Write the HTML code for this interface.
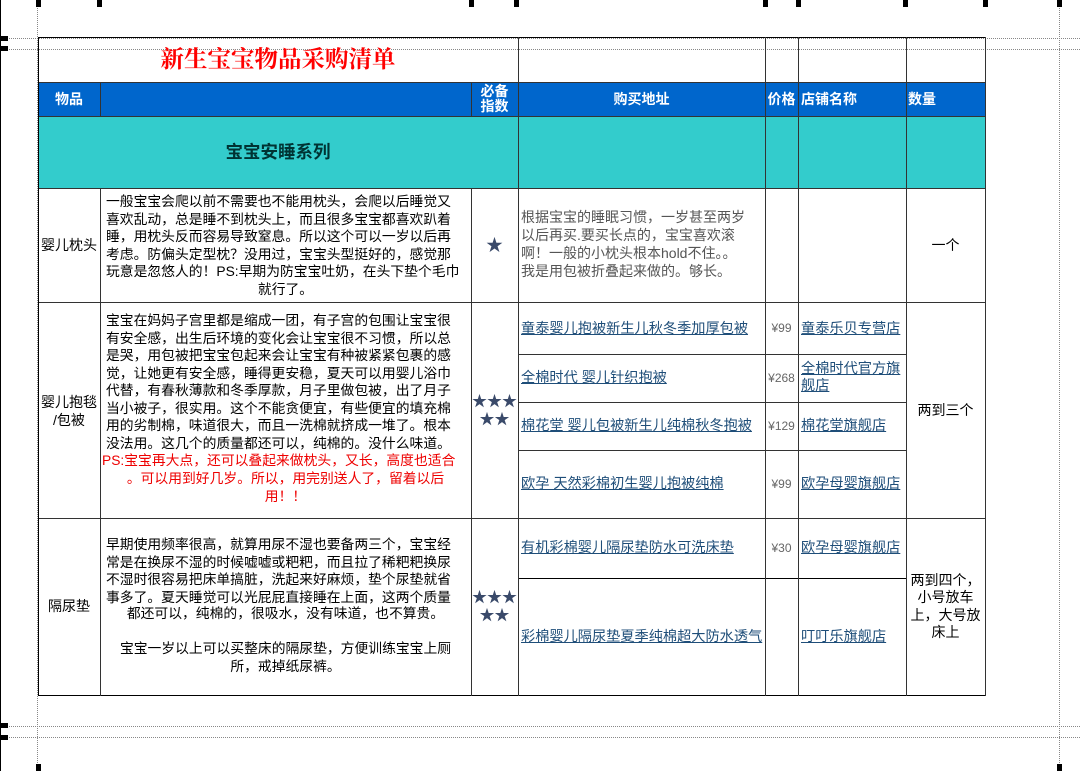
<!DOCTYPE html>
<html><head><meta charset="utf-8"><style>
*{margin:0;padding:0;box-sizing:border-box}
body{width:1080px;height:771px;background:#fff;position:relative;overflow:hidden;font-family:"Liberation Sans","Noto Sans CJK SC","WenQuanYi Zen Hei",sans-serif;font-size:14px;color:#000}
.a{position:absolute}
.h{position:absolute;height:1px;background:#333}
.v{position:absolute;width:1px;background:#333}
.c{position:absolute;display:flex;align-items:center;justify-content:center;text-align:center;line-height:17px}
.lk{position:absolute;display:flex;align-items:center;line-height:16px;color:#1f4e79;text-decoration:underline;white-space:nowrap;font-size:14.2px}
.p{color:#666;font-size:12px}
.t{position:absolute;line-height:17.5px;white-space:nowrap;font-size:13.8px}
.dh{position:absolute;height:0;border-top:1px dotted #888}
.dv{position:absolute;width:0;border-left:1px dotted #888}
.m{position:absolute;width:5px;height:7px;background:#000;top:0}
</style></head><body>
<div class="dh" style="left:0;top:38px;width:1080px"></div>
<div class="dh" style="left:0;top:49px;width:1080px"></div>
<div class="dh" style="left:0;top:726px;width:1080px"></div>
<div class="dh" style="left:0;top:737px;width:1080px"></div>
<div class="dv" style="left:37px;top:0;height:771px"></div>
<div class="dv" style="left:1059px;top:0;height:771px"></div>
<div class="a" style="left:0;top:0;width:1px;height:771px;background:#000"></div>
<div class="a" style="left:0;top:36px;width:8px;height:5px;background:#000"></div>
<div class="a" style="left:0;top:46px;width:8px;height:5px;background:#000"></div>
<div class="a" style="left:0;top:723px;width:8px;height:5px;background:#000"></div>
<div class="a" style="left:0;top:735px;width:8px;height:5px;background:#000"></div>
<div class="m" style="left:36px"></div><div class="m" style="left:97px"></div>
<div class="m" style="left:469px"></div><div class="m" style="left:514px"></div>
<div class="m" style="left:763px"></div><div class="m" style="left:796px"></div>
<div class="m" style="left:903px"></div><div class="m" style="left:983px"></div>
<div class="m" style="left:1057px"></div>
<div class="a" style="left:1057px;top:764px;width:5px;height:7px;background:#000"></div>
<div class="a" style="left:36px;top:764px;width:5px;height:7px;background:#000"></div>

<div class="a" style="left:38px;top:82px;width:947px;height:34px;background:#0066cc"></div>
<div class="a" style="left:38px;top:116px;width:947px;height:72px;background:#33cccc"></div>

<div class="c" style="left:38px;top:38px;width:480px;height:44px;color:#ff0000;font-family:'Liberation Serif','Noto Serif CJK SC',serif;font-size:23.5px;font-weight:bold">新生宝宝物品采购清单</div>
<div class="c" style="left:38px;top:82px;width:62px;height:34px;color:#fff;font-weight:bold">物品</div>
<div class="c" style="left:471px;top:82px;width:47px;height:34px;color:#fff;font-weight:bold;line-height:15px">必备<br>指数</div>
<div class="c" style="left:518px;top:82px;width:247px;height:34px;color:#fff;font-weight:bold">购买地址</div>
<div class="c" style="left:765px;top:82px;width:33px;height:34px;color:#fff;font-weight:bold">价格</div>
<div class="a" style="left:801px;top:82px;height:34px;line-height:34px;color:#fff;font-weight:bold">店铺名称</div>
<div class="a" style="left:908px;top:82px;height:34px;line-height:34px;color:#fff;font-weight:bold">数量</div>
<div class="c" style="left:38px;top:116px;width:480px;height:72px;font-weight:bold;font-size:17.5px;color:#003333">宝宝安睡系列</div>

<div class="c" style="left:38px;top:188px;width:62px;height:115px">婴儿枕头</div>
<div class="t" style="left:106px;top:193px">一般宝宝会爬以前不需要也不能用枕头，会爬以后睡觉又<br>喜欢乱动，总是睡不到枕头上，而且很多宝宝都喜欢趴着<br>睡，用枕头反而容易导致窒息。所以这个可以一岁以后再<br>考虑。防偏头定型枕？没用过，宝宝头型挺好的，感觉那<br>玩意是忽悠人的！PS:早期为防宝宝吐奶，在头下垫个毛巾</div>
<div class="c" style="left:100px;top:281px;width:371px;height:17px;font-size:13.8px">就行了。</div>
<div class="c" style="left:471px;top:188px;width:47px;height:115px;color:#3a4a6a;font-size:17px">★</div>
<div class="t" style="left:521px;top:208px;color:#555;line-height:18px;font-size:14px">根据宝宝的睡眠习惯，一岁甚至两岁<br>以后再买.要买长点的，宝宝喜欢滚<br>啊！一般的小枕头根本hold不住。。<br>我是用包被折叠起来做的。够长。</div>
<div class="c" style="left:906px;top:188px;width:79px;height:115px">一个</div>

<div class="c" style="left:38px;top:303px;width:62px;height:215px;line-height:18px">婴儿抱毯<br>/包被</div>
<div class="t" style="left:106px;top:312px">宝宝在妈妈子宫里都是缩成一团，有子宫的包围让宝宝很<br>有安全感，出生后环境的变化会让宝宝很不习惯，所以总<br>是哭，用包被把宝宝包起来会让宝宝有种被紧紧包裹的感<br>觉，让她更有安全感，睡得更安稳，夏天可以用婴儿浴巾<br>代替，有春秋薄款和冬季厚款，月子里做包被，出了月子<br>当小被子，很实用。这个不能贪便宜，有些便宜的填充棉<br>用的劣制棉，味道很大，而且一洗棉就挤成一堆了。根本<br>没法用。这几个的质量都还可以，纯棉的。没什么味道。</div>
<div class="t" style="left:102px;top:452px;color:#e00">PS:宝宝再大点，还可以叠起来做枕头，又长，高度也适合</div>
<div class="c" style="left:100px;top:470px;width:371px;height:35px;color:#e00;line-height:17.5px;font-size:13.8px">。可以用到好几岁。所以，用完别送人了，留着以后<br>用！！</div>
<div class="c" style="left:471px;top:303px;width:47px;height:215px;color:#3a4a6a;font-size:15px;line-height:18px">★★★<br>★★</div>
<div class="lk" style="left:521px;top:303px;height:51px">童泰婴儿抱被新生儿秋冬季加厚包被</div>
<div class="c p" style="left:765px;top:303px;width:33px;height:51px">¥99</div>
<div class="lk" style="left:801px;top:303px;height:51px">童泰乐贝专营店</div>
<div class="lk" style="left:521px;top:354px;height:48px">全棉时代 婴儿针织抱被</div>
<div class="c p" style="left:765px;top:354px;width:33px;height:48px">¥268</div>
<div class="lk" style="left:801px;top:354px;height:48px;white-space:normal;width:104px;line-height:17px">全棉时代官方旗舰店</div>
<div class="lk" style="left:521px;top:402px;height:48px">棉花堂 婴儿包被新生儿纯棉秋冬抱被</div>
<div class="c p" style="left:765px;top:402px;width:33px;height:48px">¥129</div>
<div class="lk" style="left:801px;top:402px;height:48px">棉花堂旗舰店</div>
<div class="lk" style="left:521px;top:450px;height:68px">欧孕 天然彩棉初生婴儿抱被纯棉</div>
<div class="c p" style="left:765px;top:450px;width:33px;height:68px">¥99</div>
<div class="lk" style="left:801px;top:450px;height:68px">欧孕母婴旗舰店</div>
<div class="c" style="left:906px;top:303px;width:79px;height:215px">两到三个</div>

<div class="c" style="left:38px;top:518px;width:62px;height:177px">隔尿垫</div>
<div class="t" style="left:106px;top:536px">早期使用频率很高，就算用尿不湿也要备两三个，宝宝经<br>常是在换尿不湿的时候嘘嘘或粑粑，而且拉了稀粑粑换尿<br>不湿时很容易把床单搞脏，洗起来好麻烦，垫个尿垫就省<br>事多了。夏天睡觉可以光屁屁直接睡在上面，这两个质量</div>
<div class="c" style="left:100px;top:605px;width:371px;height:17px;font-size:13.8px">都还可以，纯棉的，很吸水，没有味道，也不算贵。</div>
<div class="c" style="left:100px;top:640px;width:371px;height:35px;line-height:17.5px;font-size:13.8px">宝宝一岁以上可以买整床的隔尿垫，方便训练宝宝上厕<br>所，戒掉纸尿裤。</div>
<div class="c" style="left:471px;top:518px;width:47px;height:177px;color:#3a4a6a;font-size:15px;line-height:18px">★★★<br>★★</div>
<div class="lk" style="left:521px;top:518px;height:60px">有机彩棉婴儿隔尿垫防水可洗床垫</div>
<div class="c p" style="left:765px;top:518px;width:33px;height:60px">¥30</div>
<div class="lk" style="left:801px;top:518px;height:60px">欧孕母婴旗舰店</div>
<div class="lk" style="left:521px;top:578px;height:117px">彩棉婴儿隔尿垫夏季纯棉超大防水透气</div>
<div class="lk" style="left:801px;top:578px;height:117px">叮叮乐旗舰店</div>
<div class="c" style="left:906px;top:518px;width:79px;height:177px;line-height:17.5px">两到四个，<br>小号放车<br>上，大号放<br>床上</div>

<div class="h" style="left:38px;top:37px;width:948px;background:#000"></div>
<div class="h" style="left:38px;top:82px;width:948px"></div>
<div class="h" style="left:38px;top:116px;width:948px"></div>
<div class="h" style="left:38px;top:188px;width:948px"></div>
<div class="h" style="left:38px;top:302px;width:948px"></div>
<div class="h" style="left:518px;top:354px;width:388px"></div>
<div class="h" style="left:518px;top:402px;width:388px"></div>
<div class="h" style="left:518px;top:450px;width:388px"></div>
<div class="h" style="left:38px;top:518px;width:948px"></div>
<div class="h" style="left:518px;top:578px;width:388px;background:#000"></div>
<div class="h" style="left:38px;top:695px;width:948px;background:#000"></div>
<div class="v" style="left:38px;top:37px;height:659px;background:#000"></div>
<div class="v" style="left:100px;top:82px;height:34px"></div>
<div class="v" style="left:100px;top:188px;height:508px"></div>
<div class="v" style="left:471px;top:82px;height:34px"></div>
<div class="v" style="left:471px;top:188px;height:508px"></div>
<div class="v" style="left:518px;top:37px;height:659px"></div>
<div class="v" style="left:765px;top:37px;height:659px"></div>
<div class="v" style="left:798px;top:37px;height:659px"></div>
<div class="v" style="left:906px;top:37px;height:659px"></div>
<div class="v" style="left:985px;top:37px;height:659px"></div>
</body></html>
